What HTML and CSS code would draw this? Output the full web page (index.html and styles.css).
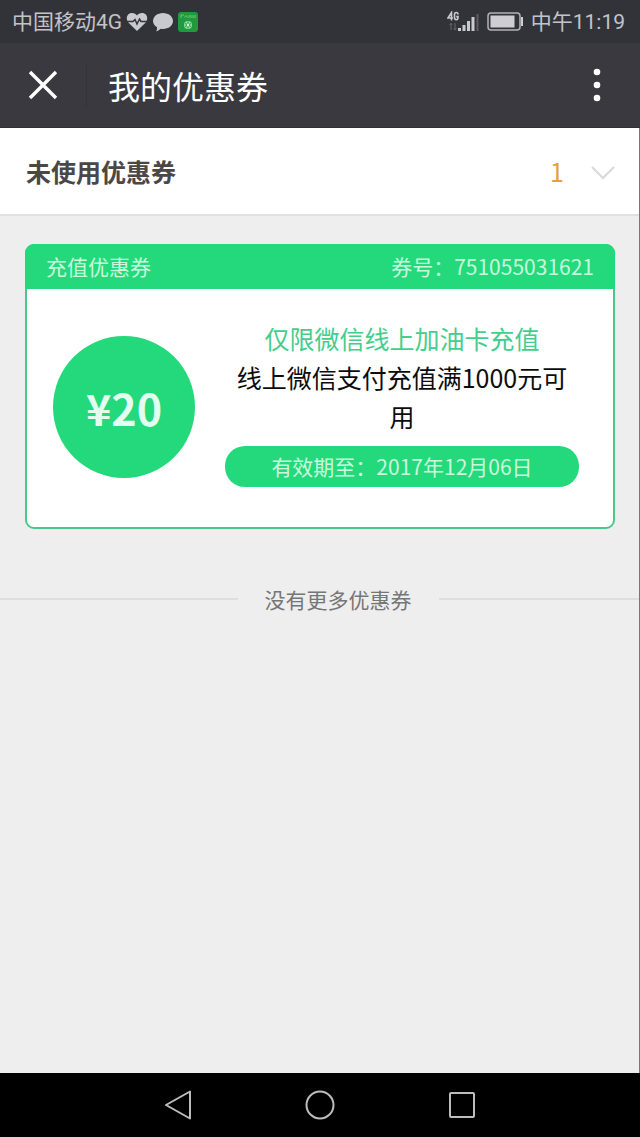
FILE: index.html
```html
<!DOCTYPE html>
<html lang="zh-CN">
<head>
<meta charset="utf-8">
<meta name="viewport" content="width=device-width, initial-scale=1">
<title>我的优惠券</title>
<link rel="stylesheet" href="styles.css">
</head>
<body>
<div class="status-bar">
  <div class="status-group">
    <span class="carrier">中国移动4G</span>
    <svg class="icon-heart" width="22" height="20" viewBox="0 0 22 20" aria-hidden="true">
      <path fill="#c9c9cf" d="M11 19 2.300 10.500C-.6 7 .7 1 6 1c2.400 0 4 1 5 2.600C12 2 13.600 1 16 1c5.300 0 6.600 6 3.700 9.500z"/>
      <path fill="none" stroke="#35353b" stroke-width="1.500" d="M1 9.500h6l2-2 2 4.500 2.500-5 1.500 2.500h6"/>
    </svg>
    <svg class="icon-chat" width="22" height="20" viewBox="0 0 22 20" aria-hidden="true">
      <path fill="#c9c9cf" d="M11 1c5.600 0 10 3.600 10 8s-4.400 8-10 8c-.8 0-1.600 0-2.300-.2C7.500 18 6 19 4.200 19.300c.7-1.100 1-2.500.8-4C2.500 13.700 1 11.500 1 9c0-4.400 4.400-8 10-8z"/>
    </svg>
    <svg class="icon-app" width="20" height="20" viewBox="0 0 20 20" aria-hidden="true">
      <rect width="20" height="20" rx="3" fill="#1f9a3c"/>
      <path d="M3 3v3M3 3h3M6.500 5.500 8 3.500 9.500 5.500M11 3v3M13 3v3M15 3v3M17 3v3" fill="none" stroke="#6cc47d"/>
      <circle cx="10" cy="13" r="4" fill="#8fdba0"/>
      <path d="M10 9.500v7M7 11.500l6 3M13 11.500l-6 3" stroke="#1f9a3c"/>
      <circle cx="10" cy="13" r="1.200" fill="#d5f5db"/>
    </svg>
  </div>
  <div class="status-group">
    <svg width="32" height="22" viewBox="0 0 32 22" aria-label="4G 信号">
      <g fill="none" stroke="#c9c9cf" stroke-width="1.600"><path d="M4.500 9.500V1.500L1 7h5M11 3.500C11 .8 7.500 .8 7.500 3.500v3c0 3 3.500 3 3.500 0V5.600H9.200"/></g>
      <path d="M4 12v7M2.500 14 4 12.500 5.500 14M8 12v7M6.500 17.500 8 19l1.500-1.500" fill="none" stroke="#67676d"/>
      <path d="M11 17h3v3h-3zM15.500 14h3v6h-3zM20 10h3v10h-3zM24.500 6h3v14h-3z" fill="#c9c9cf"/>
      <path d="M29.500 3h2v17h-2z" fill="#5d5d63"/>
    </svg>
    <svg class="icon-battery" width="38" height="19" viewBox="0 0 38 19" aria-label="电池">
      <rect x="1" y="1" width="32" height="17" rx="3" fill="none" stroke="#b2b2b8" stroke-width="1.500"/>
      <rect x="3.500" y="3.500" width="24" height="12" fill="#cdcdd2"/>
      <path d="M34 5h2v9h-2z" fill="#cdcdd2"/>
    </svg>
    <span>中午11:19</span>
  </div>
</div>

<header class="nav">
  <button class="close" type="button" aria-label="关闭">
    <svg width="30" height="30" viewBox="0 0 30 30"><path d="M2 2 28 28M28 2 2 28" stroke="#fff" stroke-width="3.400"/></svg>
  </button>
  <h1 class="title">我的优惠券</h1>
  <button class="more" type="button" aria-label="更多">
    <svg width="8" height="34" viewBox="0 0 8 34" fill="#fff"><circle cx="4" cy="4" r="3.300"/><circle cx="4" cy="17" r="3.300"/><circle cx="4" cy="30" r="3.300"/></svg>
  </button>
</header>

<main class="page">
  <button class="section" type="button" aria-expanded="true">
    <span class="section-name">未使用优惠券</span>
    <span class="count">1</span>
    <svg width="24" height="18" viewBox="0 0 24 18" fill="none" stroke="#d8d8d8" stroke-width="2"><path d="M1 5 12 16 23 5"/></svg>
  </button>

  <article class="coupon">
    <div class="coupon-head"><span>充值优惠券</span><span>券号：751055031621</span></div>
    <div class="coupon-body">
      <div class="amount">¥20</div>
      <div class="details">
        <p class="scope">仅限微信线上加油卡充值</p>
        <p class="rule">线上微信支付充值满1000元可用</p>
        <p class="expiry">有效期至：2017年12月06日</p>
      </div>
    </div>
  </article>

  <p class="end">没有更多优惠券</p>
</main>

<nav class="keys">
  <button type="button" aria-label="返回"><svg width="30" height="32" viewBox="0 0 30 32"><path d="M27 2.500v27L3 16z"/></svg></button>
  <button type="button" aria-label="主页"><svg width="30" height="32" viewBox="0 0 30 32"><circle cx="15" cy="16" r="13.500"/></svg></button>
  <button type="button" aria-label="最近任务"><svg width="30" height="32" viewBox="0 0 30 32"><rect x="3" y="4" width="24" height="24" rx="1"/></svg></button>
</nav>
</body>
</html>
```
FILE: styles.css
```css
* {
  box-sizing: border-box;
}

body {
  margin: 0;
  min-height: 100vh;
  display: flex;
  flex-direction: column;
  background: #eeeeee;
  font-family: "Noto Sans CJK SC", sans-serif;
}

h1,
p {
  margin: 0;
}

button {
  margin: 0;
  padding: 0;
  border: 0;
  background: none;
  font: inherit;
  color: inherit;
}

svg {
  display: block;
}

.status-bar {
  height: 43px;
  padding: 0 15px 0 12px;
  display: flex;
  align-items: center;
  justify-content: space-between;
  background: #323338;
  color: #c3c3c9;
  font-family: Roboto, "Noto Sans CJK SC", sans-serif;
  font-size: 21px;
  line-height: 24px;
}

.status-group {
  display: flex;
  align-items: center;
  gap: 4px;
}

.icon-battery {
  margin: 0 2px 0 4px;
}

.nav {
  height: 85px;
  display: flex;
  align-items: center;
  background: #3a393f;
  border-bottom: 1px solid #303035;
  color: #ffffff;
}

.close {
  width: 87px;
  height: 46px;
  padding-left: 28px;
  border-right: 1px solid #34343a;
  display: flex;
  align-items: center;
}

.title {
  flex: 1;
  padding-left: 21px;
  font-size: 32px;
  line-height: 46px;
  font-weight: 400;
}

.more {
  padding: 0 39px;
}

.page {
  flex: 1;
  border-right: 1px solid #77777a;
}

.section {
  width: 100%;
  height: 88px;
  padding: 0 24px 0 26px;
  display: flex;
  align-items: center;
  background: #ffffff;
  border-bottom: 2px solid #e1e1e1;
  text-align: left;
  font-size: 25px;
  line-height: 36px;
}

.section-name {
  flex: 1;
  color: #4b4747;
  font-weight: 700;
}

.count {
  margin-right: 27px;
  color: #e5a044;
}

.coupon {
  margin: 28px 24px 0 25px;
  border: 2px solid #48c98b;
  border-radius: 9px;
  background: #ffffff;
}

.coupon-head {
  margin: -2px -2px 0;
  padding: 0 21px;
  display: flex;
  justify-content: space-between;
  border-radius: 9px 9px 0 0;
  background: #24d97b;
  color: #caf9dc;
  font-size: 21px;
  line-height: 45px;
}

.coupon-body {
  padding: 30px 34px 40px 26px;
  display: flex;
  gap: 30px;
}

.amount {
  flex: none;
  width: 142px;
  height: 142px;
  margin-top: 17px;
  border-radius: 50%;
  background: #24d97b;
  color: #e4fff0;
  font-size: 43px;
  line-height: 142px;
  font-weight: 700;
  text-align: center;
}

.details {
  flex: 1;
  text-align: center;
  font-size: 25px;
  line-height: 39px;
}

.scope {
  color: #43ce8d;
}

.rule {
  color: #0c0c0c;
}

.expiry {
  margin-top: 10px;
  border-radius: 20px;
  background: #24d97b;
  color: #caf9dc;
  font-size: 21px;
  line-height: 41px;
}

.end {
  margin-top: 52px;
  display: flex;
  align-items: center;
  gap: 27px;
  color: #767676;
  font-size: 21px;
  line-height: 36px;
}

.end::before,
.end::after {
  content: "";
  height: 2px;
  flex: 237;
  background: #dedede;
}

.end::after {
  flex: 200;
}

.keys {
  height: 64px;
  padding: 0 107px;
  display: flex;
  align-items: center;
  background: #000000;
}

.keys button {
  flex: 1;
  display: flex;
  justify-content: center;
}

.keys svg {
  fill: none;
  stroke: #bdbdbd;
  stroke-width: 2;
  stroke-linejoin: round;
}
```
